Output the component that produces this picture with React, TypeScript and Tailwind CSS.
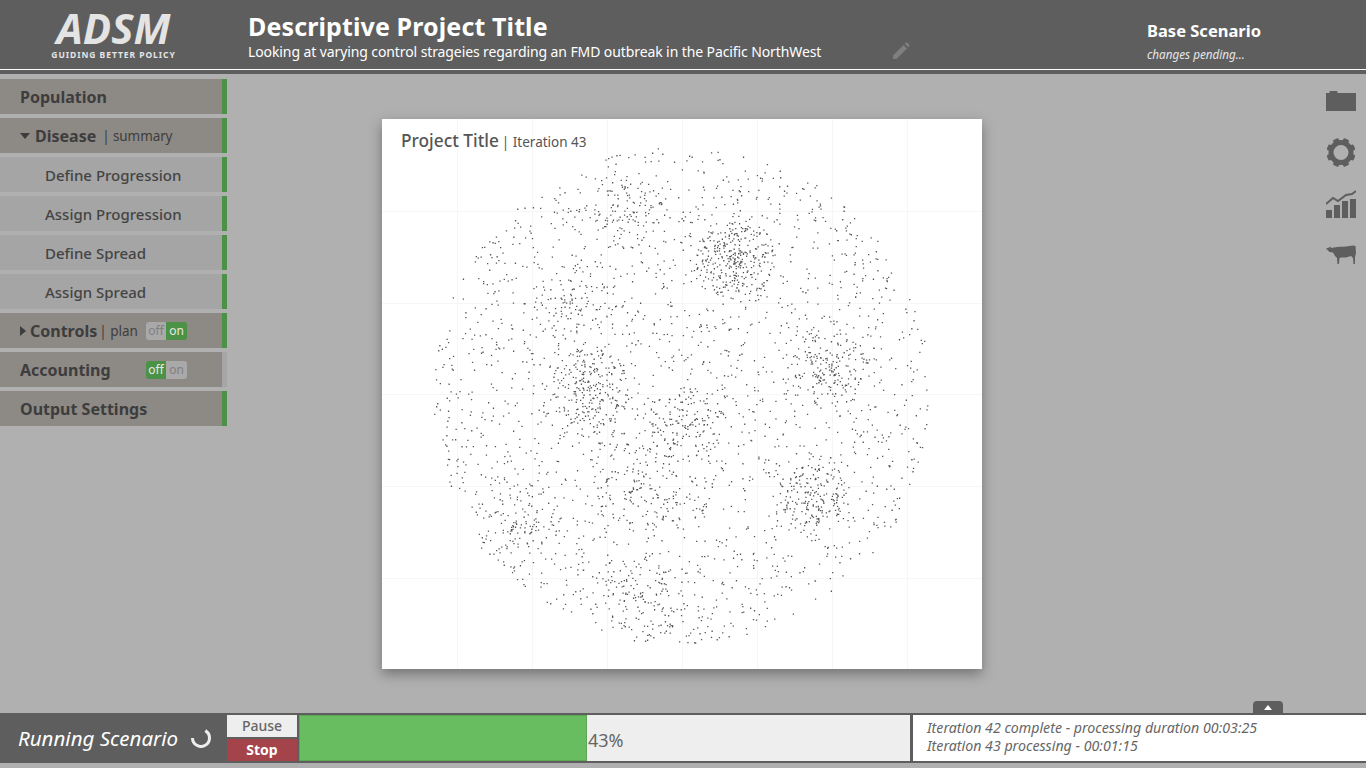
import { useMemo } from "react"

const font = { fontFamily: '"Noto Sans", sans-serif' }

type ToggleProps = { on: boolean }

function Toggle({ on }: ToggleProps) {
  return (
    <div className="flex h-[18px] w-[41px] overflow-hidden rounded-[3px] text-[12px] leading-[17px]">
      <span className={`w-[20px] text-center ${on ? "bg-[#a9a9a9] text-[#808080]" : "bg-[#4b9146] text-[#e8e8e8]"}`}>off</span>
      <span className={`w-[21px] text-center ${on ? "bg-[#4b9146] text-[#e8e8e8]" : "bg-[#a9a9a9] text-[#808080]"}`}>on</span>
    </div>
  )
}

function SideRow({ children, sub, plainBar }: { children: React.ReactNode; sub?: boolean; plainBar?: boolean }) {
  return (
    <div className={`flex h-[35px] w-[227px] items-center border-r-[5px] ${plainBar ? "border-[#a6a6a6]" : "border-[#4b9146]"} ${sub ? "bg-[#a5a5a5] pt-[2px] pl-[45px]" : "bg-[#8d8985] pl-[20px]"}`}>
      {children}
    </div>
  )
}

function Scatter() {
  const d = useMemo(() => {
    let seed = 4321
    const rnd = () => {
      seed = (seed + 0x6d2b79f5) | 0
      let t = Math.imul(seed ^ (seed >>> 15), 1 | seed)
      t = (t + Math.imul(t ^ (t >>> 7), 61 | t)) ^ t
      return ((t ^ (t >>> 14)) >>> 0) / 4294967296
    }
    // page coords minus card offset, clusters are where the dense patches sit
    const clusters = [
      { x: 353, y: 139, r: 40, n: 280 },
      { x: 208, y: 269, r: 40, n: 210 },
      { x: 448, y: 249, r: 38, n: 130 },
      { x: 430, y: 373, r: 34, n: 160 },
      { x: 303, y: 306, r: 40, n: 120 },
      { x: 248, y: 96, r: 38, n: 90 },
      { x: 188, y: 181, r: 40, n: 70 },
      { x: 258, y: 371, r: 48, n: 90 },
      { x: 138, y: 411, r: 44, n: 90 },
      { x: 263, y: 481, r: 42, n: 90 },
    ]
    let out = ""
    const put = (x: number, y: number) => {
      out += `M${x.toFixed(1)} ${y.toFixed(1)}h1.3v1.3h-1.3z`
    }
    for (let i = 0; i < 2200; i++) {
      const a = rnd() * Math.PI * 2
      const r = 249 * Math.sqrt(rnd())
      put(300 + r * Math.cos(a), 275 + r * Math.sin(a))
    }
    for (const c of clusters) {
      for (let i = 0; i < c.n; i++) {
        const a = rnd() * Math.PI * 2
        const r = c.r * Math.pow(rnd(), 0.7)
        put(c.x + r * Math.cos(a), c.y + r * Math.sin(a))
      }
    }
    return out
  }, [])
  return (
    <svg width="600" height="550" viewBox="0 0 600 550" className="block">
      <g stroke="#f6f6f6" strokeWidth="1">
        {[75, 150, 225, 300, 375, 450, 525].map((x) => (
          <line key={x} x1={x + 0.5} y1="0" x2={x + 0.5} y2="550" />
        ))}
        {[92, 184, 275, 367, 459].map((y) => (
          <line key={y} x1="0" y1={y + 0.5} x2="600" y2={y + 0.5} />
        ))}
      </g>
      <path d={d} fill="#555" />
    </svg>
  )
}

export default function App() {
  return (
    <div style={font} className="flex h-screen w-full flex-col overflow-hidden bg-[#b0b0b0]">
      {/* Header */}
      <header className="flex h-[75px] shrink-0 flex-col bg-[#5e5e5e]">
        <div className="flex h-[69px] items-start">
          <div className="flex w-[248px] shrink-0 flex-col items-center pt-[9px] pr-[21px] text-[#e4e4e4]">
            <span className="text-[42px] leading-[38px] font-bold italic">ADSM</span>
            <span className="mt-[2px] text-[8.500px] leading-[12px] font-bold tracking-[0.95px]">GUIDING BETTER POLICY</span>
          </div>
          <div className="w-[645px] shrink-0 pt-[10px] text-white">
            <h1 className="text-[25px] leading-[32px] font-bold tracking-[0.12px]">Descriptive Project Title</h1>
            <p className="pt-px text-[14px] leading-[18px] tracking-[-0.1px]">Looking at varying control strageies regarding an FMD outbreak in the Pacific NorthWest</p>
          </div>
          <svg width="18" height="18" viewBox="0 0 18 18" className="mt-[42px] ml-[-1px]" fill="#7f7f7f">
            <path d="M1 13.500 11.500 3l3.500 3.500L4.500 17H1zM12.700 1.800l1.200-1.100c.4-.4 1-.4 1.400 0l2 2c.4.4.4 1 0 1.400l-1.100 1.200z" />
          </svg>
          <div className="ml-[237px] pt-[19px] text-white">
            <div className="text-[16.500px] leading-[24px] font-bold">Base Scenario</div>
            <div className="pt-px text-[11.700px] leading-[20px] text-[#e6e6e6] italic">changes pending...</div>
          </div>
        </div>
        <div className="h-px bg-white" />
        <div className="mt-auto h-px bg-[#b0b0b0]" />
      </header>

      {/* Main */}
      <main className="flex flex-1 overflow-hidden">
        <nav className="flex w-[227px] shrink-0 flex-col gap-[4px] pt-[4px] text-[#3d3d3d]">
          <SideRow><span className="text-[16px] font-bold">Population</span></SideRow>
          <SideRow>
            <span className="mr-[5px] h-0 w-0 border-x-[5px] border-t-[6px] border-x-transparent border-t-[#3d3d3d]" />
            <span className="text-[16px] font-bold">Disease</span>
            <span className="ml-[6px] pt-px text-[13.500px] tracking-[-0.1px]">| summary</span>
          </SideRow>
          <SideRow sub><span className="text-[15px] font-medium text-[#444]">Define Progression</span></SideRow>
          <SideRow sub><span className="text-[15px] font-medium text-[#444]">Assign Progression</span></SideRow>
          <SideRow sub><span className="text-[15px] font-medium text-[#444]">Define Spread</span></SideRow>
          <SideRow sub><span className="text-[15px] font-medium text-[#444]">Assign Spread</span></SideRow>
          <SideRow>
            <span className="mr-[4px] h-0 w-0 border-y-[5px] border-l-[6px] border-y-transparent border-l-[#3d3d3d]" />
            <span className="text-[16px] font-bold">Controls</span>
            <span className="ml-[2px] pt-px text-[13.500px]">| plan</span>
            <span className="mr-[35px] ml-auto pt-px"><Toggle on /></span>
          </SideRow>
          <SideRow plainBar>
            <span className="text-[16px] font-bold">Accounting</span>
            <span className="mr-[35px] ml-auto pt-px"><Toggle on={false} /></span>
          </SideRow>
          <SideRow><span className="text-[16px] font-bold">Output Settings</span></SideRow>
        </nav>

        <section className="flex-1 pt-[44px] pl-[155px]">
          <div className="relative h-[550px] w-[600px] bg-white shadow-[0_5px_12px_rgba(0,0,0,0.35)]">
            <div className="absolute top-[9px] left-[19px] flex items-baseline text-[#555]">
              <span className="text-[17.300px] font-medium">Project Title</span>
              <span className="ml-[3px] text-[13.500px]">| Iteration 43</span>
            </div>
            <Scatter />
          </div>
        </section>

        <aside className="flex w-[40px] shrink-0 flex-col items-start pt-[16px] text-[#5e5e5e]">
          <svg width="30" height="20" viewBox="0 0 30 20" fill="currentColor">
            <path d="M0 2h3.500V1c0-.5.5-1 1-1h6c.5 0 1 .5 1 1v1H30v18H0z" />
          </svg>
          <svg width="30" height="29" viewBox="0 0 30 29" fill="none" className="mt-[27px]">
            <circle cx="15" cy="14.500" r="10" stroke="currentColor" strokeWidth="5" />
            {[22.5, 67.5, 112.5, 157.5, 202.5, 247.5, 292.5, 337.5].map((deg) => (
              <rect key={deg} x="12" y="0" width="6" height="5" rx="1.500" fill="currentColor" transform={`rotate(${deg} 15 14.500)`} />
            ))}
          </svg>
          <svg width="30" height="28" viewBox="0 0 30 28" fill="currentColor" className="mt-[23px]">
            <rect x="0" y="20" width="6" height="8" />
            <rect x="8" y="15" width="6" height="13" />
            <rect x="16" y="11" width="6" height="17" />
            <rect x="24" y="9" width="6" height="19" />
            <path d="M0 14 7 8l5 3 8-6 6-1 4-3" fill="none" stroke="currentColor" strokeWidth="2" />
          </svg>
          <svg width="30" height="19" viewBox="0 0 30 19" fill="currentColor" className="mt-[27px]">
            <path d="M0 3.500 3 2.500 4.500 1.500 5 3l3-.5C12 1.500 16 2 20 1.500L27 .5l2.500.5.500 7-1 4v7h-1.500L27 13l-2-2-5 1.500h-5l-1.500.5-.5 6h-1.500L11 13l-2-2-2-3.500L3.500 7z" />
          </svg>
        </aside>
      </main>

      {/* Status bar */}
      <footer className="relative mb-[5px] flex h-[50px] shrink-0 items-center border-y-2 border-[#5e5e5e] bg-[#5e5e5e]">
        <div className="absolute top-[-14px] left-[1253px] flex h-[12px] w-[30px] items-center justify-center rounded-t-[4px] bg-[#5e5e5e]">
          <span className="h-0 w-0 border-x-[4px] border-b-[5px] border-x-transparent border-b-white" />
        </div>
        <div className="flex w-[227px] shrink-0 items-center pl-[18px] text-white">
          <span className="pt-px text-[20.500px] italic">Running Scenario</span>
          <svg width="20" height="20" viewBox="0 0 20 20" className="mr-[16px] ml-auto" fill="none">
            <path d="M14.300 2.600A8.500 8.500 0 1 1 1.500 10" stroke="#eee" strokeWidth="3" />
          </svg>
        </div>
        <div className="flex h-full w-[70px] shrink-0 flex-col justify-between">
          <button className="h-[22px] bg-[#eeeeee] pb-[3px] text-[14px] font-medium text-[#666]">Pause</button>
          <button className="h-[22px] bg-[#a5434a] pb-[3px] text-[14px] font-bold text-white">Stop</button>
        </div>
        <div className="ml-[2px] flex h-full w-[611px] shrink-0 bg-[#eeeeee]">
          <div className="h-full w-[288px] border border-[#5aa653] bg-[#68bd60]" />
          <span className="ml-px text-[18px] leading-[50px] text-[#666]">43%</span>
        </div>
        <div className="ml-[3px] flex h-full flex-1 flex-col justify-center bg-white pb-[2px] pl-[14px] text-[14.200px] leading-[18px] text-[#666] italic">
          <div>Iteration 42 complete - processing duration 00:03:25</div>
          <div>Iteration 43 processing - 00:01:15</div>
        </div>
      </footer>
    </div>
  )
}
